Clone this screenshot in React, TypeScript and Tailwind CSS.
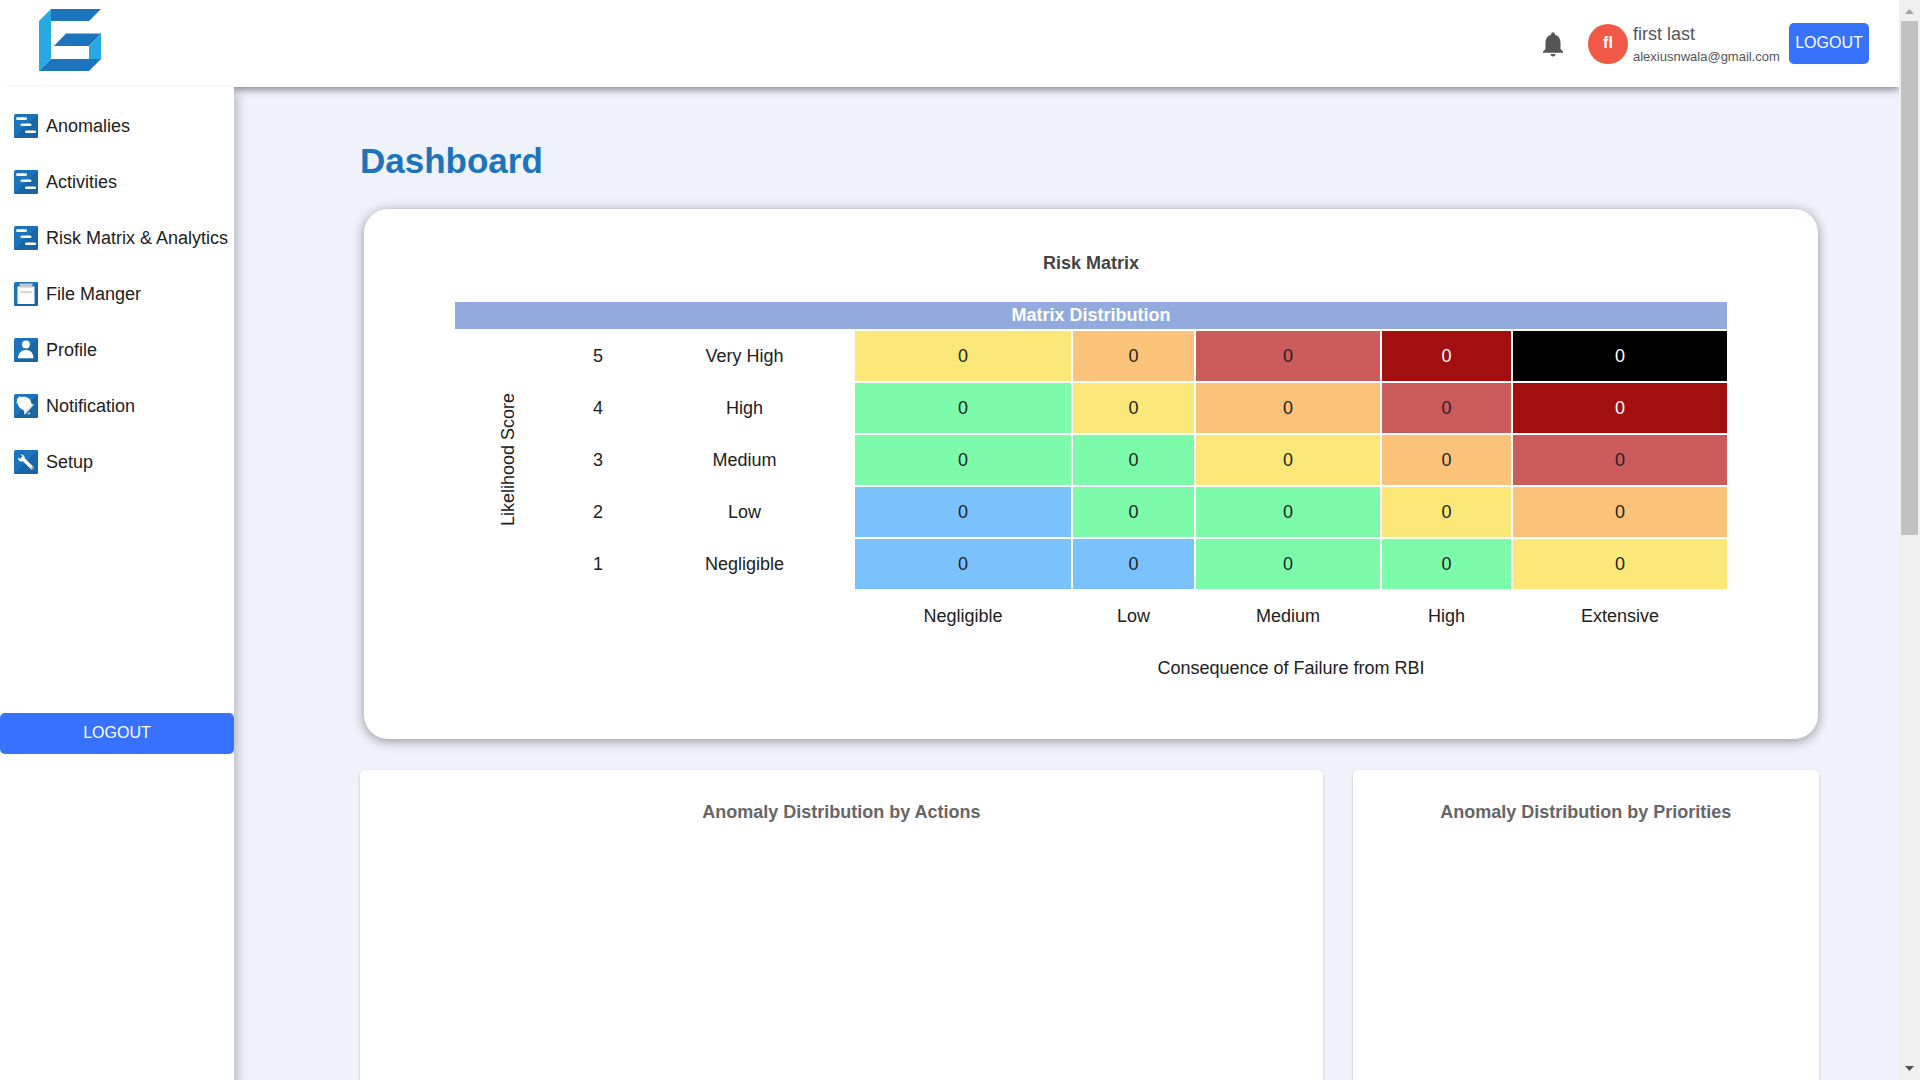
import type { ReactNode } from "react";

function Tile({ children }: { children: ReactNode }) {
  return (
    <svg viewBox="0 0 24 24" className="size-6 shrink-0" aria-hidden="true">
      <rect width="24" height="24" rx="1.500" fill="#1c75bc" />
      <path d="M24 0v22.500a1.500 1.500 0 0 1-1.500 1.500H0z" fill="#1a66a4" />
      {children}
    </svg>
  );
}

function ChartIcon() {
  return (
    <Tile>
      <rect x="2" y="3.300" width="11" height="2.600" rx="1.300" fill="#fff" />
      <rect x="6.500" y="9.500" width="11" height="2.600" rx="1.300" fill="#fff" />
      <rect x="11" y="16.500" width="11" height="2.600" rx="1.300" fill="#fff" />
    </Tile>
  );
}

function FileIcon() {
  return (
    <Tile>
      <path d="M5.500 1.500h13V6h-13z" fill="#c4c6c8" />
      <path d="M3.500 4.500H5L6 5.500h12l1-1h1.500V22h-17z" fill="#fff" />
      <rect x="6" y="9" width="12" height="2.200" rx="1" fill="#d3d5d8" />
    </Tile>
  );
}

function ProfileIcon() {
  return (
    <Tile>
      <circle cx="12" cy="6.500" r="3.900" fill="#fff" />
      <path d="M4 20.300c0-5.200 3.500-8.300 8-8.300s7.500 3.100 7.500 8.300z" fill="#fff" />
    </Tile>
  );
}

function NotificationIcon() {
  return (
    <Tile>
      <path d="M2.800 9.500V7M6.500 2.600H4.500" stroke="#8fb9dc" strokeWidth="1" />
      <path d="M3.200 4.500 5 3.300c3.500-1 7.500-.8 10 1.200 1.800 1.600 1.800 3.500 2.500 5l1.200 1.200-8.300 7.300-1-2c-1.500-.7-3.200-1.600-4.600-3.500C3.200 9.800 2.800 7 3.200 4.500z" fill="#fff" />
      <path d="m20.500 10-9.800 10.900-.8-3.100 8.800-7.400z" fill="#e6e7e9" />
      <path d="m13 20.300 3-2.300v2.300z" fill="#e6e7e9" />
    </Tile>
  );
}

function SetupIcon() {
  return (
    <Tile>
      <path d="m8.500 8.500 9.500 9.200" stroke="#fff" strokeWidth="3.300" strokeLinecap="round" />
      <path d="M6.500 4.200a4 4 0 0 1 4.100 5.200l-2.300 2.200c-2.500.3-4.500-1.500-4.300-4.100l2.500 1.500 1.700-.8.200-2z" fill="#fff" />
      <circle cx="18.200" cy="17.900" r=".8" fill="#1a66a4" />
    </Tile>
  );
}

function Logo() {
  return (
    <svg viewBox="0 0 64 64" className="size-16" role="img" aria-label="Company logo">
      <path d="M1 13 13 1v50L1 63z" fill="#27aae1" />
      <path d="M13 1h50L51 13H13z" fill="#1c75bc" />
      <path d="M28 25.500h35L51 38H16z" fill="#1c75bc" />
      <path d="M63 25.500V51H51V38z" fill="#27aae1" />
      <path d="M1 63 13 51h50L51 63z" fill="#1c75bc" />
    </svg>
  );
}

const navItems = [
  { label: "Anomalies", icon: <ChartIcon /> },
  { label: "Activities", icon: <ChartIcon /> },
  { label: "Risk Matrix & Analytics", icon: <ChartIcon /> },
  { label: "File Manger", icon: <FileIcon /> },
  { label: "Profile", icon: <ProfileIcon /> },
  { label: "Notification", icon: <NotificationIcon /> },
  { label: "Setup", icon: <SetupIcon /> },
];

const blue = "bg-[#79c2fd]";
const green = "bg-[#7cfcab]";
const yellow = "bg-[#fbe879]";
const orange = "bg-[#fbc279]";
const red = "bg-[#cc5b5b]";
const darkRed = "bg-[#a30f0f] text-white";
const black = "bg-black text-white";

const rows = [
  { score: 5, name: "Very High", cells: [yellow, orange, red, darkRed, black] },
  { score: 4, name: "High", cells: [green, yellow, orange, red, darkRed] },
  { score: 3, name: "Medium", cells: [green, green, yellow, orange, red] },
  { score: 2, name: "Low", cells: [blue, green, green, yellow, orange] },
  { score: 1, name: "Negligible", cells: [blue, blue, green, green, yellow] },
];

const consequences = ["Negligible", "Low", "Medium", "High", "Extensive"];

function Header() {
  return (
    <header className="relative z-10 flex h-[87px] shrink-0 items-center justify-between bg-white pr-[30px] pl-[38px] shadow-[0_2px_8px_rgba(0,0,0,0.5)]">
      <a href="#" className="-mt-2">
        <Logo />
      </a>
      <div className="flex items-center text-[#555]">
        <button type="button" aria-label="Notifications" className="mr-5">
          <svg viewBox="0 0 24 24" className="size-[30px]" fill="currentColor" aria-hidden="true">
            <path d="M12 22c1.100 0 2-.9 2-2h-4c0 1.100.9 2 2 2zm6-6v-5c0-3.070-1.630-5.640-4.500-6.320V4c0-.83-.67-1.500-1.500-1.500s-1.500.67-1.500 1.500v.68C7.640 5.360 6 7.920 6 11v5l-2 2v1h16v-1l-2-2z" />
          </svg>
        </button>
        <div className="flex size-10 items-center justify-center rounded-full bg-[#f05945] pb-[2px] font-bold text-white">
          fl
        </div>
        <div className="ml-[5px] w-[156px] pt-[3px] whitespace-nowrap">
          <p className="text-lg leading-6">first last</p>
          <p className="text-[13px] leading-[22px]">alexiusnwala@gmail.com</p>
        </div>
        <button type="button" className="h-[41px] w-20 rounded-[5px] bg-[#3772ff] pb-[2px] text-white">
          LOGOUT
        </button>
      </div>
    </header>
  );
}

function Sidebar() {
  return (
    <aside className="relative z-20 flex w-[234px] shrink-0 flex-col bg-white pt-[11px] shadow-[3px_6px_10px_rgba(0,0,0,0.25)]">
      <nav>
        <ul>
          {navItems.map((item) => (
            <li key={item.label}>
              <a href="#" className="flex h-14 items-center gap-2 pl-[14px] text-lg whitespace-nowrap">
                {item.icon}
                <span className="pb-px">{item.label}</span>
              </a>
            </li>
          ))}
        </ul>
      </nav>
      <button type="button" className="mt-[223px] h-[41px] w-full shrink-0 rounded-[5px] bg-[#3772ff] pb-[2px] text-white">
        LOGOUT
      </button>
    </aside>
  );
}

function RiskMatrix() {
  return (
    <section className="mr-px ml-1 rounded-[24px] bg-white px-[89px] pt-10 pb-11 shadow-[0_2px_12px_rgba(0,0,0,0.4)]">
      <h2 className="text-center text-lg leading-7 font-bold text-[#444]">Risk Matrix</h2>
      <table className="mt-[23px] w-full table-fixed border-separate border-spacing-[2px] text-center text-lg">
        <colgroup>
          <col className="w-[105px]" />
          <col className="w-[72px]" />
          <col className="w-[217px]" />
          <col className="w-[216px]" />
          <col className="w-[121px]" />
          <col className="w-[184px]" />
          <col className="w-[129px]" />
          <col className="w-[214px]" />
        </colgroup>
        <thead>
          <tr>
            <th colSpan={8} className="h-[27px] bg-[#92aade] p-0 leading-[27px] font-bold text-white">
              Matrix Distribution
            </th>
          </tr>
        </thead>
        <tbody>
          {rows.map((row, i) => (
            <tr key={row.score} className="h-[50px]">
              {i === 0 && (
                <th rowSpan={5} scope="rowgroup" className="p-0 font-normal">
                  <span className="inline-block rotate-180 align-middle [writing-mode:vertical-rl]">
                    Likelihood Score
                  </span>
                </th>
              )}
              <td className="p-0">{row.score}</td>
              <th scope="row" className="p-0 font-normal">
                {row.name}
              </th>
              {row.cells.map((tone, j) => (
                <td key={consequences[j]} className={`p-0 ${tone}`}>
                  0
                </td>
              ))}
            </tr>
          ))}
        </tbody>
        <tfoot>
          <tr className="h-[50px]">
            <td colSpan={3} />
            {consequences.map((label) => (
              <th key={label} scope="col" className="p-0 font-normal">
                {label}
              </th>
            ))}
          </tr>
          <tr className="h-[50px]">
            <td colSpan={3} />
            <td colSpan={5} className="p-0">
              Consequence of Failure from RBI
            </td>
          </tr>
        </tfoot>
      </table>
    </section>
  );
}

function ChartCard({ title, className }: { title: string; className: string }) {
  return (
    <section className={`min-h-[420px] rounded-[5px] bg-white pt-7 shadow-[0_1px_3px_rgba(0,0,0,0.2)] ${className}`}>
      <h2 className="text-center text-lg leading-7 font-bold text-[#666]">{title}</h2>
    </section>
  );
}

function Scrollbar() {
  return (
    <div className="flex w-[21px] shrink-0 flex-col items-center bg-[#f0f0f0]" aria-hidden="true">
      <svg viewBox="0 0 21 21" className="size-[21px] shrink-0">
        <path d="m6 14 4.500-5 4.500 5z" fill="#a3a3a3" />
      </svg>
      <div className="h-[514px] w-[17px] bg-[#c1c1c1]" />
      <svg viewBox="0 0 21 21" className="mt-auto size-[21px] shrink-0">
        <path d="m6 7 4.500 5L15 7z" fill="#505050" />
      </svg>
    </div>
  );
}

export default function App() {
  return (
    <div className="flex h-screen overflow-hidden bg-[#eff2fb] font-['Liberation_Sans',Arial,sans-serif] text-base text-[#212121]">
      <div className="flex min-w-0 flex-1 flex-col overflow-hidden">
        <Header />
        <div className="flex min-h-0 flex-1">
          <Sidebar />
          <main className="min-w-0 flex-1 overflow-hidden pt-[50px] pr-20 pl-[126px]">
            <h1 className="text-[35px] leading-[48px] font-bold text-[#1c75bc]">Dashboard</h1>
            <div className="mt-6">
              <RiskMatrix />
            </div>
            <div className="mt-[31px] grid grid-cols-12 gap-[30px]">
              <ChartCard title="Anomaly Distribution by Actions" className="col-span-8" />
              <ChartCard title="Anomaly Distribution by Priorities" className="col-span-4" />
            </div>
          </main>
        </div>
      </div>
      <Scrollbar />
    </div>
  );
}
